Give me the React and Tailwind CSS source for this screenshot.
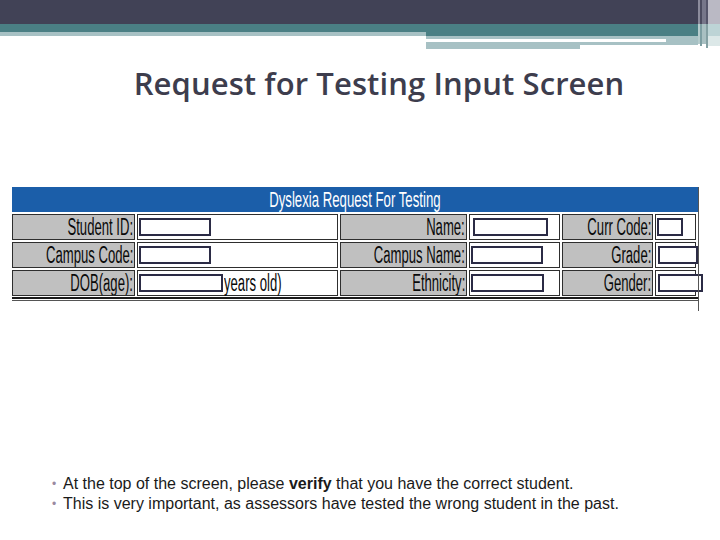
import React from 'react';

const narrow = { fontFamily: '"Liberation Sans", Arial, sans-serif' };

function Label({ children }) {
  return (
    <div className="bg-[#c0c0c0] border border-[#2e2e2e] flex items-center justify-end pr-[1px] overflow-hidden">
      <span
        className="inline-block origin-right scale-x-[0.57] whitespace-nowrap text-[23px] leading-none text-[#0a0a0a]"
        style={narrow}
      >
        {children}
      </span>
    </div>
  );
}

function Field({ box, extra }) {
  return (
    <div className="bg-white border border-[#2e2e2e] flex items-center pl-[1px]">
      <div className={`h-[18px] bg-white border-2 border-[#2b2b45] shrink-0 ${box}`} />
      {extra && (
        <span
          className="inline-block origin-left scale-x-[0.57] whitespace-nowrap text-[23px] leading-none text-[#0a0a0a] ml-[1px]"
          style={narrow}
        >
          {extra}
        </span>
      )}
    </div>
  );
}

export default function App() {
  const rows = [
    ['Student ID:', 'w-[72px]', null, 'Name:', 'w-[75px] ml-[2px]', 'Curr Code:', 'w-[26px]'],
    ['Campus Code:', 'w-[72px]', null, 'Campus Name:', 'w-[72px]', 'Grade:', 'w-[40px] ml-[1px]'],
    ['DOB(age):', 'w-[84px]', 'years old)', 'Ethnicity:', 'w-[73px]', 'Gender:', 'w-[45px] ml-[1px]'],
  ];

  return (
    <div className="w-[720px] h-[540px] bg-white overflow-hidden flex flex-col">
      {/* header decoration */}
      <div className="flex h-[50px]">
        <div className="flex-1 flex flex-col">
          <div className="h-[24px] bg-[#414256]" />
          <div className="h-[8px] bg-[#4a7f84]" />
          <div className="flex flex-1">
            <div className="w-[426px] flex flex-col">
              <div className="h-[4px] bg-[#a7c1c4]" />
            </div>
            <div className="flex-1 flex flex-col">
              <div className="h-[4px] bg-[#4a7f84]" />
              <div className="h-[3px] bg-[#a7c1c4]" />
              <div className="h-[3px] flex">
                <div className="w-[240px] bg-white" />
                <div className="flex-1 bg-[#a7c1c4]" />
              </div>
              <div className="h-[3px] bg-[#a7c1c4]" />
              <div className="h-[4px] w-[154px] bg-[#a7c1c4]" />
            </div>
          </div>
        </div>
        <div className="w-[22px] flex">
          <div className="w-[2px] flex flex-col">
            <div className="h-[24px] bg-[#8c8c9c]" />
            <div className="h-[20px] bg-[#b6cccd]" />
          </div>
          <div className="w-[2px] flex flex-col">
            <div className="h-[24px] bg-[#4c4c60]" />
            <div className="h-[22px] bg-[#7d9ea2]" />
          </div>
          <div className="w-[4px] flex flex-col">
            <div className="h-[24px] bg-[#77778a]" />
            <div className="h-[20px] bg-[#a9c0c2]" />
          </div>
          <div className="w-[2px] flex flex-col">
            <div className="h-[24px] bg-[#55556a]" />
            <div className="h-[24px] bg-[#84a0a3]" />
          </div>
          <div className="flex-1 flex flex-col">
            <div className="h-[24px] bg-[#bab9c4]" />
            <div className="h-[12px] bg-[#bdd4d6]" />
            <div className="h-[10px] bg-[#dce8e8]" />
          </div>
        </div>
      </div>

      {/* title */}
      <div className="flex justify-center pl-[38px] mt-[15px]">
        <h1
          className="text-[31px] leading-[36px] font-semibold text-[#3d3d4d] tracking-[0.1px]"
          style={{ fontFamily: '"Open Sans", "DejaVu Sans", sans-serif' }}
        >
          Request for Testing Input Screen
        </h1>
      </div>

      {/* table */}
      <div className="mt-[86px] ml-[12px] w-[687px] flex">
        <div className="w-[686px] flex flex-col">
          <div className="h-[25px] bg-[#1b5ea9] flex items-center justify-center">
            <span
              className="inline-block scale-x-[0.6] whitespace-nowrap text-[22px] leading-none text-white"
              style={narrow}
            >
              Dyslexia Request For Testing
            </span>
          </div>
          <div className="flex flex-col gap-[2px] pt-[2px] bg-white">
            {rows.map((r, i) => (
              <div
                key={i}
                className="grid grid-cols-[123px_201px_127px_91px_91px_41px] gap-[2px] h-[26px]"
              >
                <Label>{r[0]}</Label>
                <Field box={r[1]} extra={r[2]} />
                <Label>{r[3]}</Label>
                <Field box={r[4]} />
                <Label>{r[5]}</Label>
                <Field box={r[6]} />
              </div>
            ))}
          </div>
          <div className="h-[1px] bg-white" />
          <div className="h-[2px] bg-[#1a1a1a]" />
          <div className="h-[1px] bg-white" />
          <div className="h-[1px] bg-[#555]" />
        </div>
        <div className="w-[1px] h-[124px] bg-[#555]" />
      </div>

      {/* bullets */}
      <ul
        className="mt-[163px] ml-[52px] text-[16px] leading-[20px] text-[#1a1a1a]"
        style={{ fontFamily: '"Liberation Sans", Arial, sans-serif' }}
      >
        <li className="flex">
          <span className="w-[11px] text-[#9a8aa0] text-[12px]">•</span>
          <span>
            At the top of the screen, please <b>verify</b> that you have the correct student.
          </span>
        </li>
        <li className="flex">
          <span className="w-[11px] text-[#9a8aa0] text-[12px]">•</span>
          <span>This is very important, as assessors have tested the wrong student in the past.</span>
        </li>
      </ul>
    </div>
  );
}
